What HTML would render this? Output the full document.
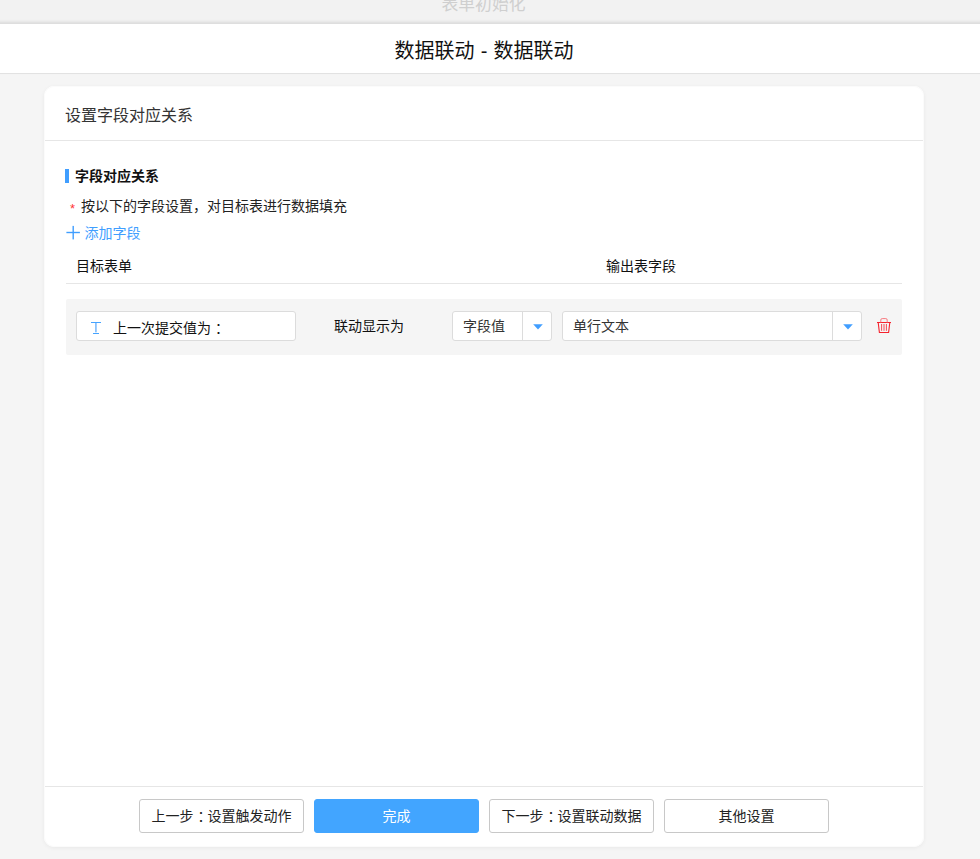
<!DOCTYPE html>
<html lang="zh-CN">
<head>
<meta charset="utf-8">
<title>数据联动</title>
<style>
*{box-sizing:border-box;margin:0;padding:0}
html,body{width:980px;height:859px;overflow:hidden;background:#f5f5f5;font-family:"Liberation Sans","Noto Sans CJK SC",sans-serif;color:#111;font-size:14px}
.abs{position:absolute;white-space:nowrap}
#topbg{left:0;top:0;width:980px;height:24px;background:#f2f2f2}
#toptxt{left:0;width:967px;text-align:center;top:-7px;font-size:16.8px;color:#cfcfcf;line-height:24px}
#hdr{left:-10px;top:24px;width:1000px;height:50px;background:#fff;box-shadow:0 -2px 3px rgba(0,0,0,.10);border-bottom:1px solid #e2e2e2;text-align:center;font-size:20px;line-height:54px;overflow:visible;color:#111;padding-right:12px;word-spacing:0.5px}
#card{left:44px;top:86px;width:880px;height:761px;background:#fff;border-radius:10px;box-shadow:0 1px 4px rgba(0,0,0,.055),inset 0 0 0 1px #fbfbfb}
#ctitle{left:21px;top:18px;font-size:16px;line-height:24px;color:#333}
#cdiv{left:1px;top:54px;width:878px;height:1px;background:#e6e6e6}
#bar{left:21px;top:83px;width:4px;height:14px;background:#409eff}
#stitle{left:31px;top:80px;font-weight:bold;font-size:14px;line-height:20px;color:#111}
#tip{left:26px;top:110px;font-size:14px;line-height:20px;color:#222}
#tip i{color:#f33;font-style:normal;font-size:13px;margin-right:6px;position:relative;top:2px}
#add{left:22px;top:137px;font-size:14px;line-height:20px;color:#409eff;padding-left:18.5px}
#th1{left:32px;top:170px;line-height:20px}
#th2{left:562px;top:170px;line-height:20px}
#thline{left:22px;top:197px;width:836px;height:1px;background:#e6e6e6}
#row{left:22px;top:213px;width:836px;height:56px;background:#f5f5f5;border-radius:2px}
.box{position:absolute;top:12px;height:30px;background:#fff;border:1px solid #dcdcdc;border-radius:3px;line-height:28px;white-space:nowrap}
#b1{left:10px;width:220px;padding-left:36px;font-size:14px;line-height:32px;color:#111}
.col{margin-left:4px;margin-right:-4px}
#lbl{left:268px;top:12px;line-height:30px;font-size:14px}
#b2{left:386px;width:100px;padding-left:10px;color:#333}
#b3{left:496px;width:300px;padding-left:10px;color:#333}
.sep{position:absolute;top:0;bottom:0;width:1px;background:#dcdcdc}
.arw{position:absolute;top:11.8px}
.arr{position:absolute;top:12px;width:0;height:0;border-left:4.5px solid transparent;border-right:4.5px solid transparent;border-top:5px solid #409eff}
#fdiv{left:1px;top:700px;width:878px;height:1px;background:#e6e6e6}
.btn{position:absolute;top:713px;width:165px;height:34px;border:1px solid #c8c8c8;background:#fff;border-radius:3px;text-align:center;line-height:32px;font-size:14px;color:#222;white-space:nowrap}
.btn.pri{background:#42a5ff;border-color:#42a5ff;color:#fff}
</style>
</head>
<body>
<div class="abs" id="topbg"></div>
<div class="abs" id="toptxt">表单初始化</div>
<div class="abs" id="hdr">数据联动 - 数据联动</div>
<div class="abs" id="card">
  <div class="abs" id="ctitle">设置字段对应关系</div>
  <div class="abs" id="cdiv"></div>
  <div class="abs" id="bar"></div>
  <div class="abs" id="stitle">字段对应关系</div>
  <div class="abs" id="tip"><i>*</i>按以下的字段设置，对目标表进行数据填充</div>
  <div class="abs" id="add"><svg width="14" height="15" viewBox="0 0 14 15" style="position:absolute;left:0;top:2px"><rect x="0.4" y="6.8" width="13.5" height="1.4" fill="#409eff"/><rect x="6.5" y="0.9" width="1.4" height="13.5" fill="#409eff"/></svg>添加字段</div>
  <div class="abs" id="th1">目标表单</div>
  <div class="abs" id="th2">输出表字段</div>
  <div class="abs" id="thline"></div>
  <div class="abs" id="row">
    <div class="box" id="b1"><svg width="10" height="12" viewBox="0 0 10 12" style="position:absolute;left:14px;top:10px"><rect x="0" y="0" width="10" height="1" fill="#45a3ff"/><rect x="4.3" y="1" width="1.25" height="9.3" fill="#5aa9fb"/><rect x="2" y="11" width="6" height="1" fill="#45a3ff"/></svg>上一次提交值为<span class="col">：</span></div>
    <div class="abs" id="lbl">联动显示为</div>
    <div class="box" id="b2">字段值<span class="sep" style="left:69px"></span><svg class="arw" width="10" height="6" viewBox="0 0 10 6" style="left:79.6px"><path d="M0.2 0.3H9.800L5 5.600Z" fill="#409eff"/></svg></div>
    <div class="box" id="b3">单行文本<span class="sep" style="left:269px"></span><svg class="arw" width="10" height="6" viewBox="0 0 10 6" style="left:279.8px"><path d="M0.2 0.3H9.800L5 5.600Z" fill="#409eff"/></svg></div>
    <svg width="16" height="17" viewBox="0 0 16 17" style="position:absolute;left:810px;top:18px"><path d="M1 5.5H15M2.200 5.500L3.400 15.500H12.600L13.800 5.500" stroke="#f5222d" stroke-width="1.1" fill="none"/><path d="M5.600 7V13.800M8 7V13.800M10.400 7V13.800" stroke="#f5222d" stroke-width="0.8" fill="none"/><path d="M4.800 5.500V3Q4.800 1.600 6.200 1.600H9.800Q11.200 1.600 11.200 3V5.500" stroke="#f87a80" stroke-width="1" fill="none"/></svg>
  </div>
  <div class="abs" id="fdiv"></div>
  <div class="btn" style="left:95px">上一步<span class="col">：</span>设置触发动作</div>
  <div class="btn pri" style="left:270px">完成</div>
  <div class="btn" style="left:445px">下一步<span class="col">：</span>设置联动数据</div>
  <div class="btn" style="left:620px">其他设置</div>
</div>
</body>
</html>
